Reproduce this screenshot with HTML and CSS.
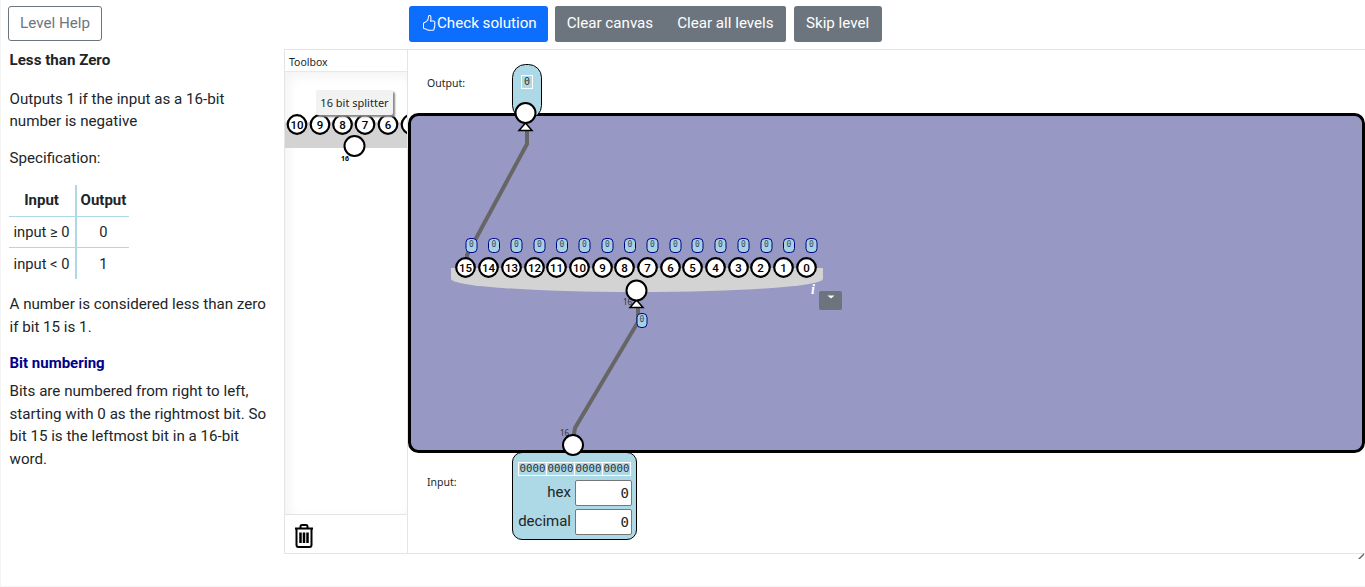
FILE: index.html
```html
<!doctype html>
<html lang="en">
	<head>
		<meta charset="UTF-8" />
		<title>Less than Zero</title>
		<link rel="stylesheet" href="styles.css">
	</head>

	<body>
		<header class="topbar">
			<button class="btn btn-outline help-btn">Level Help</button>
			<div class="toolbar">
				<button class="btn btn-primary">
					<svg class="thumb" viewBox="0 0 16 16" width="16" height="16"><path d="M8.864.046C7.908-.193 7.02.53 6.956 1.466c-.072 1.051-.23 2.016-.428 2.59-.125.36-.479 1.013-1.04 1.639-.557.623-1.282 1.178-2.131 1.41C2.685 7.288 2 7.87 2 8.72v4.001c0 .845.682 1.464 1.448 1.545 1.07.114 1.564.415 2.068.723l.048.03c.272.165.578.348.97.484.397.136.861.217 1.466.217h3.5c.937 0 1.599-.477 1.934-1.064a1.86 1.86 0 0 0 .254-.912c0-.152-.023-.312-.077-.464.201-.263.38-.578.488-.901.11-.33.172-.762.004-1.149.069-.13.12-.269.159-.403.077-.27.113-.568.113-.857 0-.288-.036-.585-.113-.856a2.144 2.144 0 0 0-.138-.362 1.9 1.9 0 0 0 .234-1.734c-.206-.592-.682-1.1-1.2-1.272-.847-.282-1.803-.276-2.516-.211a9.84 9.84 0 0 0-.443.05 9.365 9.365 0 0 0-.062-4.509A1.38 1.38 0 0 0 9.125.111L8.864.046zM11.5 14.721H8c-.51 0-.863-.069-1.14-.164-.281-.097-.506-.228-.776-.393l-.04-.024c-.555-.339-1.198-.731-2.49-.868-.333-.036-.554-.29-.554-.55V8.72c0-.254.226-.543.62-.65 1.095-.3 1.977-.996 2.614-1.708.635-.71 1.064-1.475 1.238-1.978.243-.7.407-1.768.482-2.85.025-.362.36-.594.667-.518l.262.066c.16.04.258.143.288.255a8.34 8.34 0 0 1-.145 4.725.5.5 0 0 0 .595.644l.003-.001.014-.003.058-.014a8.908 8.908 0 0 1 1.036-.157c.663-.06 1.457-.054 2.11.164.175.058.45.3.57.65.107.308.087.67-.266 1.022l-.353.353.353.354c.043.043.105.141.154.315.048.167.075.37.075.581 0 .212-.027.414-.075.582-.05.174-.111.272-.154.315l-.353.353.353.354c.047.047.109.177.005.488a2.224 2.224 0 0 1-.505.805l-.353.353.353.354c.006.005.041.05.041.17a.866.866 0 0 1-.121.416c-.165.288-.503.56-1.066.56z"/></svg>Check solution
				</button>
				<div class="btn-group">
					<button class="btn btn-secondary">Clear canvas</button>
					<button class="btn btn-secondary">Clear all levels</button>
				</div>
				<button class="btn btn-secondary skip-btn">Skip level</button>
			</div>
		</header>

		<main class="page">
			<section class="level-text">
				<p class="level-title"><b>Less than Zero</b></p>
				<p>Outputs 1 if the input as a 16-bit number is negative</p>
				<p>Specification:</p>
				<table class="truth">
					<tr><th>Input</th><th>Output</th></tr>
					<tr><td>input ≥ 0</td><td>0</td></tr>
					<tr><td>input &lt; 0</td><td>1</td></tr>
				</table>
				<p class="note">A number is considered less than zero if bit 15 is 1.</p>
				<h4>Bit numbering</h4>
				<p>Bits are numbered from right to left, starting with 0 as the rightmost bit. So bit 15 is the leftmost bit in a 16-bit word.</p>
			</section>

			<section class="workspace">
				<aside class="toolbox">
					<div class="toolbox-title">Toolbox</div>
					<div class="palette">
						<svg class="palette-svg" viewBox="285 71 122 443">
							<path class="splitter-bar" d="M285 121H407V147H285Z" />
							<g class="pin">
								<circle cx="297" cy="123.500" r="9.300" /><text x="297" y="127.500">10</text>
								<circle cx="320" cy="123.500" r="9.300" /><text x="320" y="127.500">9</text>
								<circle cx="342.500" cy="123.500" r="9.300" /><text x="342.500" y="127.500">8</text>
								<circle cx="365" cy="123.500" r="9.300" /><text x="365" y="127.500">7</text>
								<circle cx="388" cy="123.500" r="9.300" /><text x="388" y="127.500">6</text>
								<circle cx="411" cy="123.500" r="9.300" />
							</g>
							<circle class="port" cx="354.500" cy="145" r="10" />
							<text class="tiny tiny-bold" x="341" y="160">16</text>
						</svg>
						<div class="tooltip">16 bit splitter</div>
					</div>
					<div class="trash">
						<svg viewBox="0 0 20 24" width="20" height="24">
							<path class="trash-line" d="M6.500 4V2.500Q6.500 1 8 1H12Q13.500 1 13.500 2.500V4M1 4.500H19M2.500 5V21Q2.500 23 4.500 23H15.500Q17.500 23 17.500 21V5" />
							<path class="trash-bars" d="M6.500 8.500V19M10 8.500V19M13.500 8.500V19" />
						</svg>
					</div>
				</aside>

				<div class="canvas">
					<span class="io-label output-label">Output:</span>
					<span class="io-label input-label">Input:</span>

					<div class="input-box">
						<div class="bits">
							<span>0000</span><span>0000</span><span>0000</span><span>0000</span>
						</div>
						<label class="num-row">hex <input type="text" value="0" /></label>
						<label class="num-row">decimal <input type="text" value="0" /></label>
					</div>

					<svg class="diagram" viewBox="408 50 957 503">
						<rect class="board" x="409.500" y="114.500" width="954" height="337" rx="9" />

						<rect class="output-pill" x="512.500" y="64.500" width="29" height="54" rx="13" />
						<rect class="value-box" x="521.500" y="75.500" width="11" height="13" />
						<text class="mono" x="527" y="85">0</text>

						<path class="wire" d="M527 130V144L467 255V262" />
						<path class="wire" d="M638 306V322L575 428L573 440" />

						<path class="splitter-bar" d="M451 268H823V279A186 13 0 0 1 451 279Z" />

						<g class="bit-pills">
							<rect x="466" y="238.500" width="11" height="14" rx="4" />
							<rect x="488.500" y="238.500" width="11" height="14" rx="4" />
							<rect x="511" y="238.500" width="11" height="14" rx="4" />
							<rect x="534" y="238.500" width="11" height="14" rx="4" />
							<rect x="556.500" y="238.500" width="11" height="14" rx="4" />
							<rect x="579" y="238.500" width="11" height="14" rx="4" />
							<rect x="602" y="238.500" width="11" height="14" rx="4" />
							<rect x="624.500" y="238.500" width="11" height="14" rx="4" />
							<rect x="647" y="238.500" width="11" height="14" rx="4" />
							<rect x="670" y="238.500" width="11" height="14" rx="4" />
							<rect x="692" y="238.500" width="11" height="14" rx="4" />
							<rect x="715" y="238.500" width="11" height="14" rx="4" />
							<rect x="738" y="238.500" width="11" height="14" rx="4" />
							<rect x="761" y="238.500" width="11" height="14" rx="4" />
							<rect x="783.500" y="238.500" width="11" height="14" rx="4" />
							<rect x="806" y="238.500" width="11" height="14" rx="4" />
							<rect x="637" y="313.500" width="10" height="14" rx="4" />
						</g>
						<g class="mono mono-small">
							<text x="471.500" y="247">0</text>
							<text x="494" y="247">0</text>
							<text x="516.500" y="247">0</text>
							<text x="539.500" y="247">0</text>
							<text x="562" y="247">0</text>
							<text x="584.500" y="247">0</text>
							<text x="607.500" y="247">0</text>
							<text x="630" y="247">0</text>
							<text x="652.500" y="247">0</text>
							<text x="675.500" y="247">0</text>
							<text x="697.500" y="247">0</text>
							<text x="720.500" y="247">0</text>
							<text x="743.500" y="247">0</text>
							<text x="766.500" y="247">0</text>
							<text x="789" y="247">0</text>
							<text x="811.500" y="247">0</text>
							<text x="642" y="322">0</text>
						</g>

						<g class="pin">
							<circle cx="465.500" cy="267.500" r="9.300" /><text x="465.500" y="271.500">15</text>
							<circle cx="488.500" cy="267.500" r="9.300" /><text x="488.500" y="271.500">14</text>
							<circle cx="511.500" cy="267.500" r="9.300" /><text x="511.500" y="271.500">13</text>
							<circle cx="534.500" cy="267.500" r="9.300" /><text x="534.500" y="271.500">12</text>
							<circle cx="556.500" cy="267.500" r="9.300" /><text x="556.500" y="271.500">11</text>
							<circle cx="579.500" cy="267.500" r="9.300" /><text x="579.500" y="271.500">10</text>
							<circle cx="602.500" cy="267.500" r="9.300" /><text x="602.500" y="271.500">9</text>
							<circle cx="624.500" cy="267.500" r="9.300" /><text x="624.500" y="271.500">8</text>
							<circle cx="647.500" cy="267.500" r="9.300" /><text x="647.500" y="271.500">7</text>
							<circle cx="670.500" cy="267.500" r="9.300" /><text x="670.500" y="271.500">6</text>
							<circle cx="692.500" cy="267.500" r="9.300" /><text x="692.500" y="271.500">5</text>
							<circle cx="715.500" cy="267.500" r="9.300" /><text x="715.500" y="271.500">4</text>
							<circle cx="738.500" cy="267.500" r="9.300" /><text x="738.500" y="271.500">3</text>
							<circle cx="760.500" cy="267.500" r="9.300" /><text x="760.500" y="271.500">2</text>
							<circle cx="783.500" cy="267.500" r="9.300" /><text x="783.500" y="271.500">1</text>
							<circle cx="806.500" cy="267.500" r="9.300" /><text x="806.500" y="271.500">0</text>
						</g>

						<path class="arrow" d="M525.500 123L532 130.500H519Z" />
						<circle class="port" cx="525.500" cy="113" r="10" />

						<text class="tiny" x="623" y="305">16</text>
						<path class="arrow" d="M636.500 300L643 307.500H630Z" />
						<circle class="port" cx="636.500" cy="290.500" r="10" />

						<text class="info" x="813" y="294">i</text>
						<rect class="drop-btn" x="819" y="291" width="23" height="19" rx="2" />
						<path class="caret" d="M827.500 295.500H834.500L831 298.500Z" />

						<text class="tiny" x="560" y="436">16</text>
						<circle class="port" cx="573" cy="445" r="10" />
					</svg>
				</div>
				<svg class="resize-grip" viewBox="0 0 6 6" width="6" height="6"><path d="M0 6L6 0V2L2 6Z" /></svg>
			</section>
		</main>
	</body>
</html>
```

FILE: styles.css
```css
* {
	box-sizing: border-box;
}

html,
body {
	height: 100%;
}

body {
	margin: 0;
	overflow: hidden;
	font-family: Roboto, sans-serif;
	font-size: 15.150px;
	line-height: 1.500;
	color: #212529;
	background-color: white;
	box-shadow: inset 1px -1px 0 #f4f4f4;
}

.topbar {
	display: flex;
	align-items: flex-start;
	height: 49px;
	padding: 6px 0 0 8px;
}

.toolbar {
	display: flex;
	gap: 7px;
	margin-left: 307px;
}

.btn {
	height: 36px;
	padding: 0 12px 2px;
	font-family: inherit;
	font-size: 15.150px;
	color: white;
	border: none;
	border-radius: 3px;
	white-space: nowrap;
	cursor: pointer;
}

.help-btn {
	width: 94px;
	height: 35px;
	padding: 0 0 2px;
}

.btn-outline {
	color: #6c757d;
	background-color: white;
	border: 1px solid #6c757d;
}

.btn-primary {
	display: flex;
	align-items: center;
	padding-right: 11px;
	background-color: #0d6efd;
}

.btn-secondary {
	background-color: #6c757d;
}

.btn-group {
	display: flex;
	border-radius: 3px;
	background-color: #6c757d;
}

.skip-btn {
	width: 88px;
	margin-left: 1px;
}

.thumb {
	fill: white;
}

.page {
	display: grid;
	grid-template-columns: 284px 1fr;
}

.level-text {
	padding-left: 9.500px;
	padding-right: 16px;
}

.level-text p {
	margin: 0 0 14px;
}

.level-text .level-title {
	margin-bottom: 16px;
}

.level-text b {
	font-weight: 700;
}

.level-text h4 {
	margin: 0 0 5px;
	font-size: 15px;
	font-weight: 700;
	color: darkblue;
}

.truth {
	margin: 15px 0 14px -1px;
	border-collapse: collapse;
}

.truth th,
.truth td {
	height: 31px;
	padding: 0 5px;
	text-align: center;
	font-size: 14.700px;
}

.truth th {
	height: 32px;
	font-size: 15px;
}

.truth td:last-child,
.truth th:last-child {
	padding: 0 3px 0 4px;
}

.truth tr + tr td {
	border-top: 1px solid lightblue;
}

.truth tr th:first-child,
.truth tr td:first-child {
	border-right: 2px solid lightblue;
}

.workspace {
	position: relative;
	display: flex;
	height: 505px;
	border-top: 1px solid #e4e4e4;
	border-bottom: 1px solid #e4e4e4;
}

.toolbox {
	display: flex;
	flex-direction: column;
	width: 124px;
	border-left: 1px solid #e4e4e4;
	border-right: 1px solid #e4e4e4;
}

.toolbox-title {
	height: 22px;
	padding-left: 4px;
	font-family: "Noto Sans", sans-serif;
	font-size: 10.500px;
	line-height: 24px;
	border-bottom: 1px solid #e8e8e8;
}

.palette {
	position: relative;
	flex: 1;
	overflow: hidden;
	box-shadow: inset 4px 4px 12px rgba(0, 0, 0, 0.05);
}

.palette-svg {
	position: absolute;
	left: 0;
	top: 0;
	width: 122px;
	height: 443px;
}

.tooltip {
	position: absolute;
	left: 31px;
	top: 18px;
	width: 77px;
	height: 25px;
	font-family: "Noto Sans", sans-serif;
	font-size: 11px;
	line-height: 25px;
	text-align: center;
	background-color: #f2f2f2;
	border-radius: 2px;
	box-shadow: 2px 2px 2px #888;
}

.trash {
	height: 39px;
	padding: 9px 0 0 8.500px;
	border-top: 1px solid #e4e4e4;
}

.trash svg {
	display: block;
}

.trash-line {
	fill: none;
	stroke: black;
	stroke-width: 2;
}

.trash-bars {
	fill: none;
	stroke: black;
	stroke-width: 2.500;
}

.canvas {
	position: relative;
	flex: 1;
}

.diagram {
	position: absolute;
	left: 0;
	top: 0;
	width: 957px;
	height: 503px;
	overflow: hidden;
	pointer-events: none;
}

.board {
	fill: #9898c4;
	stroke: black;
	stroke-width: 3;
}

.output-pill {
	fill: lightblue;
	stroke: black;
}

.value-box {
	fill: none;
	stroke: white;
}

.mono {
	font-family: "DejaVu Sans Mono", monospace;
	font-size: 10px;
	fill: #333;
	text-anchor: middle;
}

.mono-small {
	font-size: 8px;
	fill: #446;
}

.wire {
	fill: none;
	stroke: #666;
	stroke-width: 4;
}

.splitter-bar {
	fill: #d3d3d3;
}

.bit-pills rect {
	fill: #a5d3e3;
	stroke: #00008b;
}

.pin circle,
.port {
	fill: white;
	stroke: black;
}

.pin circle {
	stroke-width: 2.200;
}

.port {
	stroke-width: 2;
}

.pin text {
	font-family: Roboto, sans-serif;
	font-size: 11.500px;
	font-weight: 500;
	fill: black;
	text-anchor: middle;
}

.arrow {
	fill: white;
	stroke: black;
	stroke-width: 1.500;
}

.tiny {
	font-family: "Noto Sans", sans-serif;
	font-size: 8px;
	fill: #333;
}

.tiny-bold {
	font-size: 7px;
	font-weight: 700;
	fill: black;
}

.info {
	font-family: "Liberation Serif", serif;
	font-size: 14px;
	font-weight: 700;
	font-style: italic;
	fill: white;
	text-anchor: middle;
}

.drop-btn {
	fill: #6c757d;
}

.caret {
	fill: white;
}

.io-label {
	position: absolute;
	left: 19px;
	font-family: "Noto Sans", sans-serif;
	font-size: 10.500px;
	line-height: 14px;
}

.output-label {
	top: 26px;
}

.input-label {
	top: 425px;
}

.input-box {
	position: absolute;
	left: 104px;
	top: 402px;
	width: 125px;
	height: 88px;
	padding: 9px 4px 0 5px;
	background-color: lightblue;
	border: 1px solid black;
	border-radius: 10px;
}

.bits {
	display: flex;
	height: 14px;
	margin: 0 1px 2px 0;
	border: 1px solid white;
	font-family: "DejaVu Sans Mono", monospace;
	font-size: 10.800px;
	line-height: 12px;
	color: #333;
}

.bits span {
	flex: 1;
	text-align: center;
}

.bits span + span {
	border-left: 1px solid white;
}

.num-row {
	display: flex;
	justify-content: flex-end;
	align-items: center;
	gap: 4px;
	height: 29px;
	font-size: 15px;
}

.num-row input {
	width: 57px;
	height: 26px;
	padding: 0 2px;
	font-family: "DejaVu Sans Mono", monospace;
	font-size: 14px;
	text-align: right;
	color: #222;
	background-color: white;
	border: 1px solid #777;
	border-radius: 2px;
}

.resize-grip {
	position: absolute;
	right: 1px;
	bottom: -6px;
	fill: #666;
}
```
